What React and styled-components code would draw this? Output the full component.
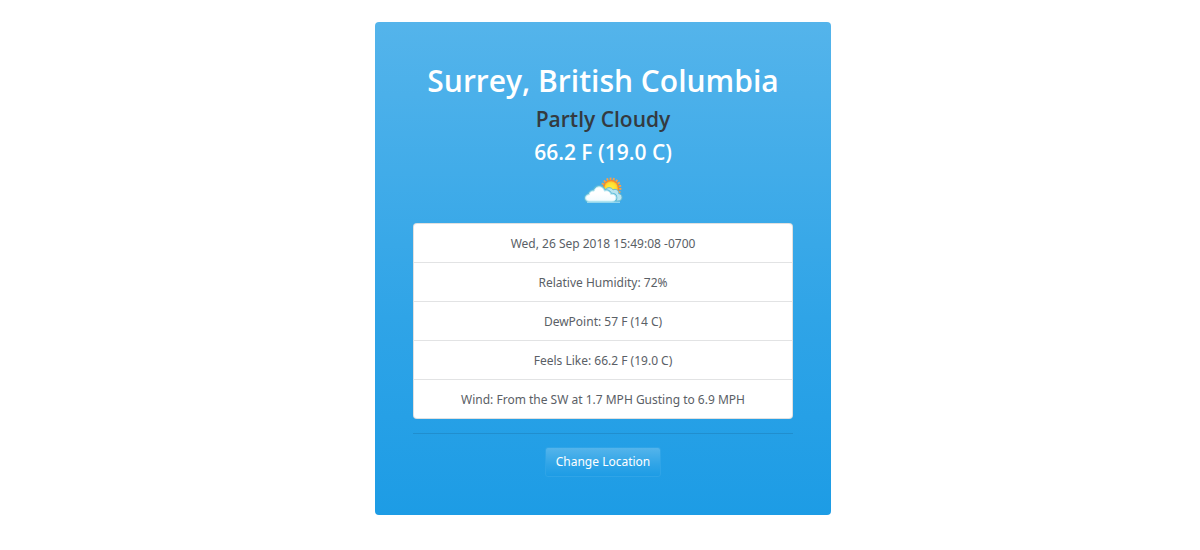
import React from "react";
import styled, { createGlobalStyle } from "styled-components";

const GlobalStyle = createGlobalStyle`
  *, *::before, *::after { box-sizing: border-box; }
  body {
    margin: 0;
    background: #fff;
    color: #5a6066;
    font-family: "Noto Sans", "Open Sans", sans-serif;
    font-size: 12px;
    line-height: 18px;
  }
`;

const Page = styled.main`
  display: flex;
  justify-content: center;
  padding: 22px 0 22px 6px;
`;

const Card = styled.section`
  display: flex;
  flex-direction: column;
  align-items: center;
  width: 100%;
  max-width: 456px;
  padding: 39px 38px 38px;
  border-radius: 4px;
  background: linear-gradient(180deg, #54b4eb, #2fa4e7 60%, #1d9ce5);
  text-align: center;
`;

const Place = styled.h1`
  margin: 0 0 5px;
  color: #fff;
  font-family: "Open Sans", sans-serif;
  font-size: 30px;
  font-weight: 600;
  line-height: 40px;
`;

const Reading = styled.h2`
  margin: 0 0 6px;
  color: ${(p) => (p.$dark ? "#343a40" : "#fff")};
  font-family: "Open Sans", sans-serif;
  font-size: 21px;
  font-weight: 600;
  line-height: 27px;
`;

const WeatherIcon = styled.svg`
  display: block;
  width: 40px;
  height: 40px;
  margin-bottom: 11px;
`;

const Details = styled.ul`
  width: 100%;
  margin: 0;
  padding: 0;
  list-style: none;
  background: #fff;
  border: 1px solid rgba(0, 0, 0, 0.12);
  border-radius: 4px;
`;

const Detail = styled.li`
  padding: 11px 16px 9px;

  & + & {
    border-top: 1px solid #e2e3e4;
  }
`;

const Divider = styled.hr`
  width: 100%;
  margin: 14px 0 13px;
  border: 0;
  border-top: 1px solid rgba(0, 0, 0, 0.1);
`;

const ChangeButton = styled.button`
  padding: 5px 10px;
  border: 1px solid #2fa4e7;
  border-radius: 3px;
  background: linear-gradient(180deg, #54b4eb, #2fa4e7 60%, #1d9ce5);
  color: #fff;
  font: inherit;
  cursor: pointer;
`;

const DETAILS = [
  "Wed, 26 Sep 2018 15:49:08 -0700",
  "Relative Humidity: 72%",
  "DewPoint: 57 F (14 C)",
  "Feels Like: 66.2 F (19.0 C)",
  "Wind: From the SW at 1.7 MPH Gusting to 6.9 MPH",
];

function PartlyCloudy() {
  return (
    <WeatherIcon viewBox="0 0 40 40" role="img" aria-label="Partly cloudy">
      <defs>
        <radialGradient id="sun">
          <stop offset="0" stopColor="#fff23c" />
          <stop offset="0.7" stopColor="#ffe033" />
          <stop offset="1" stopColor="#ffc42c" />
        </radialGradient>
        <linearGradient id="cloud" x1="0" y1="0" x2="0" y2="1">
          <stop offset="0.5" stopColor="#fff" />
          <stop offset="1" stopColor="#f2fbfe" />
        </linearGradient>
      </defs>
      <circle cx="28" cy="16" r="9.2" fill="none" stroke="#f8a04a" strokeWidth="2.4" strokeDasharray="1.8 1.41" />
      <circle cx="28" cy="16" r="8.3" fill="#f68b2a" />
      <circle cx="28" cy="16" r="6.8" fill="url(#sun)" />
      <path d="M20 29h15c2.6 0 4-1.5 4-3.7 0-2.3-1.5-3.5-3.3-3.6.5-3.4-3.2-5.4-5.6-3.8-1.6-3-6.5-3-8.1.2z" fill="#b8e5f0" stroke="#68b9cf" strokeWidth="1" />
      <path d="M6.4 29.2C4 29.2 2.6 28 2.6 26c0-2.2 1.7-3.4 3.7-3.3-.1-2.7 2.4-4.2 4.8-3.6 1.3-5.6 8.8-6 10.4.1 2.8-1.2 5.8.3 6.1 3.1 3.1-.7 5.4.8 5.4 3.4 0 2.2-1.5 3.5-3.7 3.5z" fill="url(#cloud)" stroke="#62bcd8" strokeWidth="2.8" />
      <path d="M6.4 29.2C4 29.2 2.6 28 2.6 26c0-2.2 1.7-3.4 3.7-3.3-.1-2.7 2.4-4.2 4.8-3.6 1.3-5.6 8.8-6 10.4.1 2.8-1.2 5.8.3 6.1 3.1 3.1-.7 5.4.8 5.4 3.4 0 2.2-1.5 3.5-3.7 3.5z" fill="url(#cloud)" stroke="#c2edf5" strokeWidth="1" />
      <path d="M4 30.2h33" stroke="#b5e8f2" strokeWidth="1" />
    </WeatherIcon>
  );
}

export default function App() {
  return (
    <>
      <GlobalStyle />
      <Page>
        <Card>
          <Place>Surrey, British Columbia</Place>
          <Reading $dark>Partly Cloudy</Reading>
          <Reading>66.2 F (19.0 C)</Reading>
          <PartlyCloudy />
          <Details>
            {DETAILS.map((text) => (
              <Detail key={text}>{text}</Detail>
            ))}
          </Details>
          <Divider />
          <ChangeButton type="button">Change Location</ChangeButton>
        </Card>
      </Page>
    </>
  );
}
